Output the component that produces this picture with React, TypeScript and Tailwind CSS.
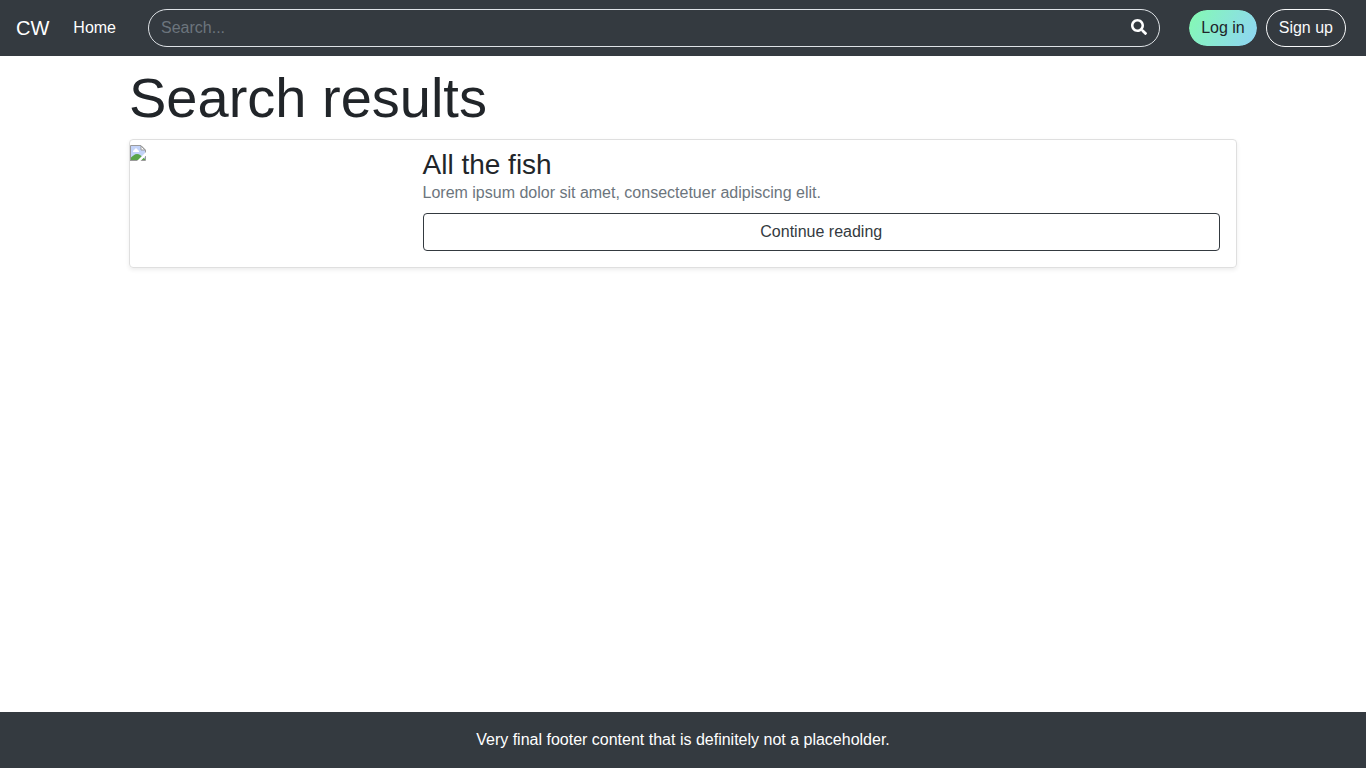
import React from "react";
import { FaSearch } from "react-icons/fa";

function BrokenImage() {
  return (
    <svg width="16" height="16" viewBox="0 0 16 16" role="img" aria-label="Missing picture" className="block">
      <path d="M1 1H11L15 5V15H1Z" fill="#c3d3f8" />
      <path d="M3 7V5.500H4V4.500H5V3.500H7V4.500H8V5.500H9V7Z" fill="#fff" />
      <path d="M1 15V12.500C3 11 4.500 9 7 9C9.500 9 11 10.500 12.500 12L15 14V15Z" fill="#5aa548" />
      <path d="M0.500 16V0.500H11L15.500 5V15.500H0.500" fill="none" stroke="#9b9b9b" />
      <path d="M11 1V5H15Z" fill="#fff" stroke="#9b9b9b" />
      <path d="M7 16L16 7V10.500L10.500 16Z" fill="#fff" />
    </svg>
  );
}

function NavBar() {
  return (
    <nav className="flex h-14 items-center bg-[#343a40] pl-4 pr-5">
      <a href="#" className="mr-4 text-xl text-white">CW</a>
      <a href="#" className="px-2 text-white">Home</a>
      <form className="relative ml-6 mr-7 flex flex-1" onSubmit={(e) => e.preventDefault()}>
        <input
          type="search"
          aria-label="Search"
          placeholder="Search..."
          className="h-[38px] w-full rounded-full border border-[#dee2e6] bg-transparent pl-3 pr-10 text-white outline-none placeholder:text-[#6c757d]"
        />
        <button type="submit" aria-label="Submit search" className="absolute inset-y-0 right-0 flex items-center pb-0.5 pr-[13px] text-white">
          <FaSearch size={16} />
        </button>
      </form>
      <div className="flex items-center gap-2">
        <button type="button" className="h-[38px] rounded-full border border-[#343a40] bg-linear-120 from-[#84fab0] to-[#8fd3f4] bg-clip-padding px-3 text-[#212529]">
          Log in
        </button>
        <button type="button" className="h-[38px] rounded-full border border-[#f8f9fa] px-3 text-[#f8f9fa]">
          Sign up
        </button>
      </div>
    </nav>
  );
}

function ResultCard() {
  return (
    <article className="flex rounded border border-[#dfdfdf] shadow-[0_2px_4px_rgba(0,0,0,0.075)]">
      <div className="w-1/4 shrink-0 pt-[5px]">
        <BrokenImage />
      </div>
      <div className="flex-1 p-4 pt-2">
        <h2 className="text-[28px] leading-[33px]">All the fish</h2>
        <p className="mb-2 text-[#6c757d]">Lorem ipsum dolor sit amet, consectetuer adipiscing elit.</p>
        <a href="#" className="block rounded border border-[#343a40] py-1.5 text-center text-[#343a40]">
          Continue reading
        </a>
      </div>
    </article>
  );
}

export default function App() {
  return (
    <div className="flex min-h-screen flex-col bg-white font-['Liberation_Sans',Arial,sans-serif] text-base text-[#212529]">
      <NavBar />
      <main className="mx-auto w-full max-w-[1140px] flex-1 px-4 pt-2">
        <h1 className="mb-2 text-[56px] leading-[67px]">Search results</h1>
        <ResultCard />
      </main>
      <footer className="bg-[#343a40] p-4 text-center text-white">
        Very final footer content that is definitely not a placeholder.
      </footer>
    </div>
  );
}
